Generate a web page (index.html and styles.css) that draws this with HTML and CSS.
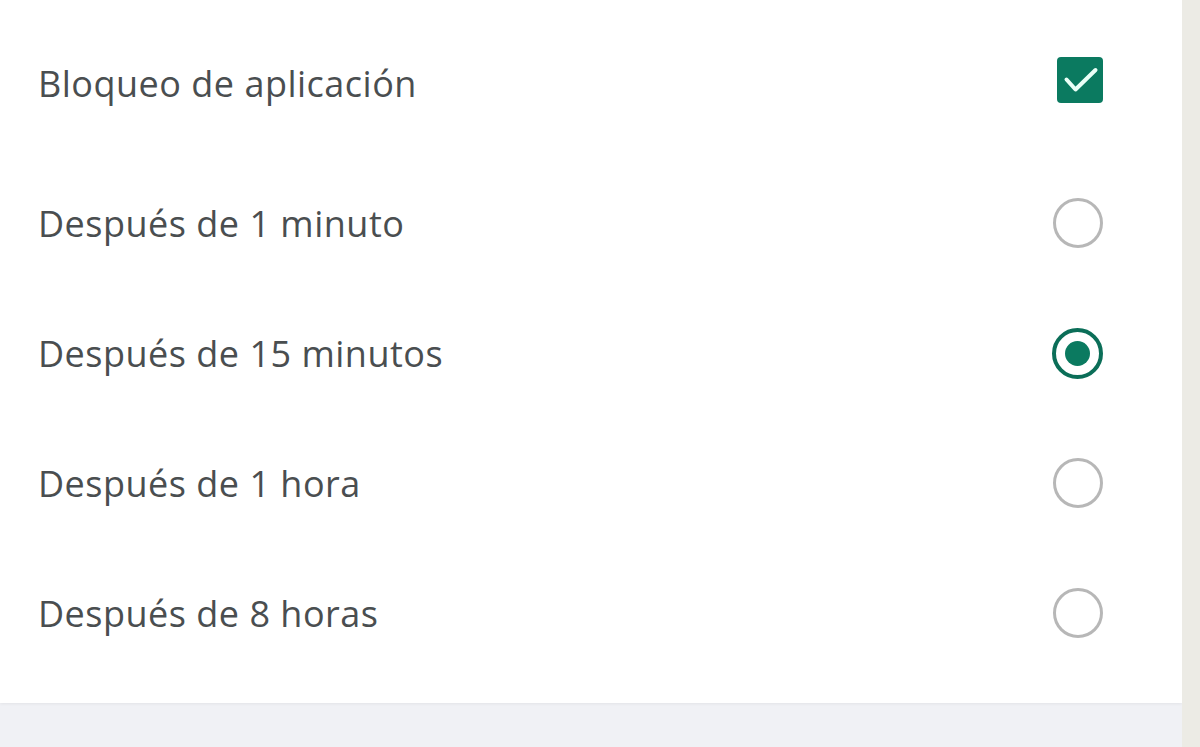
FILE: index.html
```html
<!DOCTYPE html>
<html>
<head>
<meta charset="utf-8">
<link rel="stylesheet" href="styles.css">
</head>
<body>
<div class="page">
  <div class="panel">
    <div class="row row-first">
      <span class="label">Bloqueo de aplicación</span>
      <span class="checkbox">
        <svg viewBox="0 0 46 46" width="46" height="46"><path d="M9.5 22.5 L18.5 32.5 L38.5 13" fill="none" stroke="#eafff7" stroke-width="4" stroke-linecap="round" stroke-linejoin="round"/></svg>
      </span>
    </div>
    <div class="row">
      <span class="label">Después de 1 minuto</span>
      <span class="radio"></span>
    </div>
    <div class="row">
      <span class="label">Después de 15 minutos</span>
      <span class="radio checked"></span>
    </div>
    <div class="row">
      <span class="label">Después de 1 hora</span>
      <span class="radio"></span>
    </div>
    <div class="row">
      <span class="label">Después de 8 horas</span>
      <span class="radio"></span>
    </div>
  </div>
  <div class="side"></div>
</div>
</body>
</html>
```
FILE: styles.css
```css
html, body { margin: 0; padding: 0; }
body {
  width: 1200px;
  height: 747px;
  overflow: hidden;
  background: #f0f1f5;
  font-family: "Open Sans", "Noto Sans", sans-serif;
}
.page {
  display: flex;
  height: 747px;
}
.panel {
  width: 1182px;
  height: 703px;
  background: #ffffff;
  box-shadow: 0 1px 3px rgba(0,0,0,0.06);
  padding: 18px 0 0 38px;
  box-sizing: border-box;
}
.side {
  width: 18px;
  background: #ecebe5;
}
.row {
  display: flex;
  align-items: center;
  justify-content: space-between;
  height: 130px;
  padding-right: 79px;
}
.row-first {
  height: 130px;
  margin-bottom: 10px;
}
.label {
  font-size: 36px;
  color: #4a4e50;
  letter-spacing: 0.5px;
}
.checkbox {
  width: 46px;
  height: 46px;
  border-radius: 4px;
  background: #0b7a60;
  display: flex;
  margin-right: 0;
  margin-bottom: 6px;
}
.radio {
  width: 44px;
  height: 44px;
  border: 3px solid #b7b7b7;
  border-radius: 50%;
  box-sizing: content-box;
  position: relative;
}
.radio.checked {
  border: 4px solid #0b6e58;
  width: 43px;
  height: 43px;
}
.radio.checked::after {
  content: "";
  position: absolute;
  left: 9px;
  top: 9px;
  width: 25px;
  height: 25px;
  border-radius: 50%;
  background: #0b7a60;
}
```
